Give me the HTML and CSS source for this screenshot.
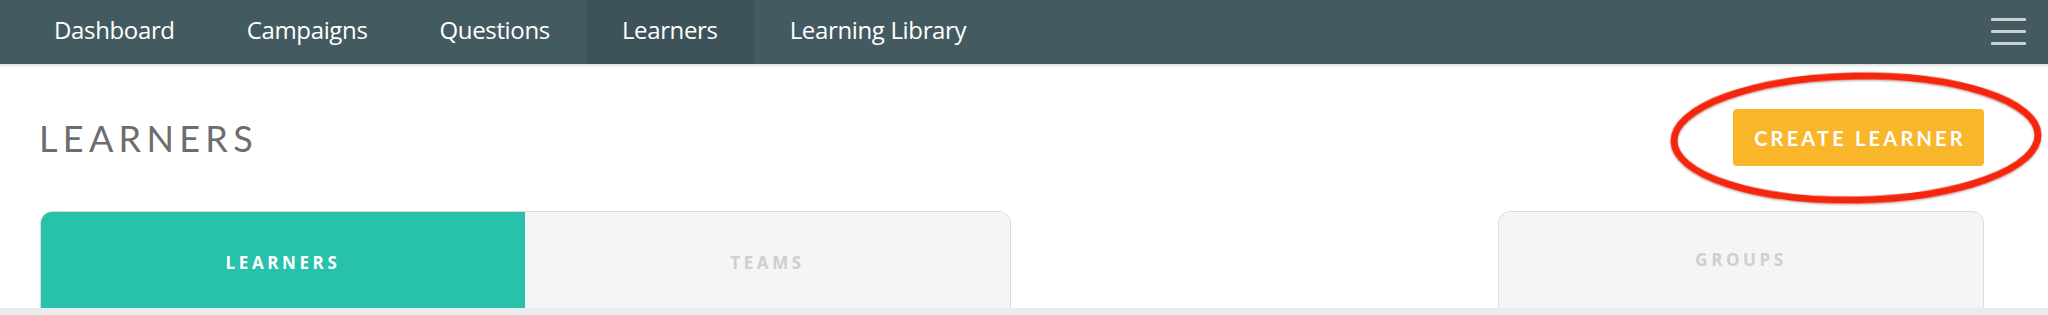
FILE: index.html
```html
<!DOCTYPE html>
<html lang="en">
<head>
<meta charset="utf-8">
<title>Learners</title>
<link rel="stylesheet" href="styles.css">
</head>
<body>
<nav class="topbar">
  <ul class="menu">
    <li class="menu-item">Dashboard</li>
    <li class="menu-item">Campaigns</li>
    <li class="menu-item">Questions</li>
    <li class="menu-item is-active">Learners</li>
    <li class="menu-item">Learning Library</li>
  </ul>
  <div class="burger" aria-label="menu">
    <span class="burger-line"></span>
    <span class="burger-line"></span>
    <span class="burger-line"></span>
  </div>
</nav>
<main class="page">
  <header class="page-head">
    <h1 class="page-title">LEARNERS</h1>
    <div class="action">
      <button class="btn-create">CREATE LEARNER</button>
      <svg class="annotation" width="390" height="150" viewBox="0 0 390 150">
        <defs>
          <filter id="sh" x="-10%" y="-10%" width="120%" height="120%">
            <feDropShadow dx="0" dy="1" stdDeviation="1.2" flood-color="#000" flood-opacity="0.35"/>
          </filter>
        </defs>
        <ellipse cx="195" cy="75" rx="182" ry="62" fill="none" stroke="#f4260c" stroke-width="7" filter="url(#sh)" transform="rotate(-1 195 75)"/>
      </svg>
    </div>
  </header>
  <section class="cards">
    <div class="tabs">
      <div class="tab tab-active">LEARNERS</div>
      <div class="tab tab-right">TEAMS</div>
    </div>
    <div class="spacer"></div>
    <div class="tab tab-single">GROUPS</div>
  </section>
</main>
<div class="bottom-strip"></div>
</body>
</html>
```
FILE: styles.css
```css
html, body {
  margin: 0;
  padding: 0;
}
body {
  width: 2048px;
  height: 315px;
  overflow: hidden;
  background: #ffffff;
  font-family: "Open Sans", "Liberation Sans", sans-serif;
}
.topbar {
  height: 64px;
  background: #445a61;
  display: flex;
  align-items: stretch;
  box-shadow: 0 2px 2px rgba(0, 0, 0, 0.12);
  position: relative;
  z-index: 2;
}
.menu {
  display: flex;
  margin: 0;
  padding: 0 0 0 18px;
  list-style: none;
}
.menu-item {
  padding: 0 36px 4px;
  line-height: 60px;
  color: #ffffff;
  font-size: 24px;
  font-weight: 400;
  letter-spacing: -0.35px;
}
.menu-item.is-active {
  background: #3d5359;
}
.burger {
  margin-left: auto;
  margin-right: 22px;
  width: 35px;
  display: flex;
  flex-direction: column;
  justify-content: center;
  gap: 9px;
  padding-bottom: 2px;
}
.burger-line {
  display: block;
  height: 3px;
  background: #c9d1d4;
  border-radius: 1px;
}
.page {
  padding: 45px 64px 0 40px;
}
.page-head {
  display: flex;
  justify-content: space-between;
  align-items: center;
  height: 57px;
}
.page-title {
  margin: 0;
  font-family: "Lato", "Open Sans", sans-serif;
  font-weight: 400;
  font-size: 36px;
  letter-spacing: 5.3px;
  color: #6d6d6d;
  position: relative;
  left: -1px;
}
.action {
  position: relative;
}
.btn-create {
  display: block;
  width: 251px;
  height: 57px;
  border: none;
  border-radius: 4px;
  background: #f9b62b;
  color: #ffffff;
  font-family: "Lato", "Open Sans", sans-serif;
  font-weight: 700;
  font-size: 20px;
  letter-spacing: 3.2px;
  padding: 0 0 0 3px;
}
.annotation {
  position: absolute;
  left: -72px;
  top: -46px;
  pointer-events: none;
}
.cards {
  margin-top: 45px;
  height: 97px;
  overflow: hidden;
  display: grid;
  grid-template-columns: 971px 487px 486px;
}
.tabs {
  display: flex;
  border: 1px solid #dcdcd8;
  border-radius: 12px 12px 0 0;
  overflow: hidden;
  height: 110px;
}
.tab {
  flex: 1;
  display: flex;
  align-items: center;
  justify-content: center;
  height: 100px;
  font-size: 17px;
  font-weight: 700;
  letter-spacing: 3.6px;
  color: #cfcfcb;
  background: #f5f5f5;
}
.tab-active {
  background: #27c2a9;
  color: #ffffff;
  flex: 0 0 484px;
}
.tab-single {
  border: 1px solid #dcdcd8;
  border-radius: 12px 12px 0 0;
  height: 110px;
  align-items: flex-start;
  padding-top: 36px;
  box-sizing: border-box;
}
.bottom-strip {
  height: 7px;
  background: #eaeced;
}
```
